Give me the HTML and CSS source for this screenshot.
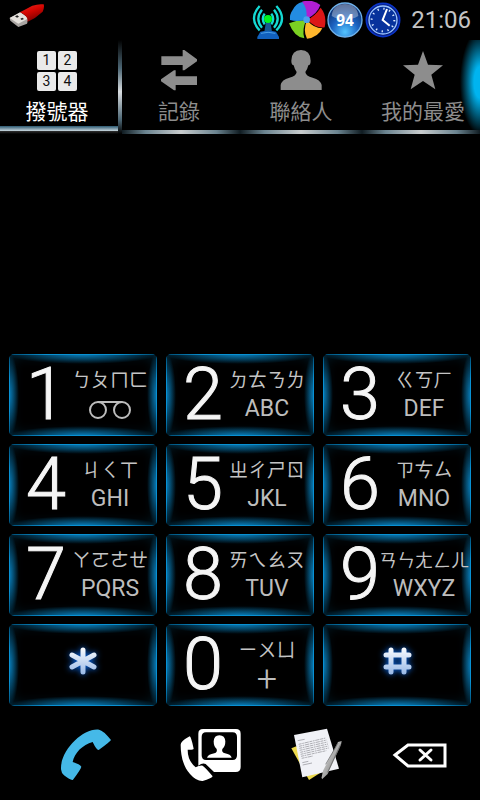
FILE: index.html
```html
<!DOCTYPE html>
<html lang="zh-Hant">
<head>
  <meta charset="UTF-8">
  <meta name="viewport" content="width=device-width, initial-scale=1.0">
  <title>撥號器</title>
  <link rel="stylesheet" href="styles.css">
</head>
<body>
  <div class="phone">
    <header class="status-bar">
      <!-- USB stick -->
      <svg class="usb-icon" width="36" height="24" viewBox="0 0 108 72">
        <defs>
          <linearGradient id="usb-red" x1="0" y1="0" x2="0.5" y2="1">
            <stop offset="0" stop-color="#e82a20"/>
            <stop offset="0.5" stop-color="#d40500"/>
            <stop offset="1" stop-color="#700"/>
          </linearGradient>
        </defs>
        <path d="M2 42 L34 25 L59 43 L54 59 L28 69 L4 50 Z" fill="#a9a5a2"/>
        <path d="M2 42 L34 25 L59 43 L28 59 Z" fill="#e5e1dc"/>
        <path d="M18 37 L25 34 L30 38 L24 41 Z M34 44 L40 41 L45 45 L38 48 Z" fill="#222"/>
        <path d="M33 25 L70 5 Q88 -1 104 1 Q107 10 101 23 Q80 43 55 54 Q60 38 33 25 Z" fill="url(#usb-red)"/>
      </svg>
      <div class="status-icons">
        <svg width="36" height="38" viewBox="0 0 108 114">
          <g fill="none" stroke="#14d9d3" stroke-width="7">
            <path d="M38 38 Q27 53 38 70 M58 38 Q69 53 58 70"/>
            <path d="M30 26 Q8 53 30 80 M66 26 Q88 53 66 80"/>
            <path d="M23 15 Q-11 53 23 88 M73 15 Q107 53 73 88"/>
          </g>
          <path d="M42 62 H55 L60 92 H37 Z" fill="#155a92"/>
          <path d="M25 92 Q48 86 72 92 L81 108 V114 H16 V108 Z" fill="#1160bd"/>
          <path d="M27 97 Q48 91 70 97" fill="none" stroke="#4aa0e8" stroke-width="3"/>
          <circle cx="48" cy="54" r="12" fill="#00f51d"/>
        </svg>
        <svg width="38" height="38" viewBox="0 0 114 114">
          <path d="M56 54 L42 2 Q74 -7 97 12 Q88 39 56 54" fill="#b01fd2"/>
          <path d="M58 56 Q82 44 98 20 Q118 44 110 79 Q84 83 58 56" fill="#dc1717"/>
          <path d="M57 57 Q77 82 103 82 Q90 110 57 113 Q44 89 57 57" fill="#ffb62d"/>
          <path d="M55 58 Q41 86 49 112 Q19 109 3 67 Q28 56 55 58" fill="#7bd022"/>
          <path d="M54 56 Q28 64 6 57 Q4 40 14 27 Q23 8 43 3 Q60 25 55 54" fill="#238ce2"/>
          <circle cx="56" cy="56" r="10" fill="#4aa0ee"/>
        </svg>
        <svg width="38" height="38" viewBox="0 0 114 114">
          <defs>
            <radialGradient id="ball" cx="0.5" cy="0.85" r="0.8">
              <stop offset="0" stop-color="#54c4ff"/>
              <stop offset="0.5" stop-color="#1c62c0"/>
              <stop offset="1" stop-color="#0c2a66"/>
            </radialGradient>
          </defs>
          <circle cx="57" cy="57" r="51" fill="url(#ball)" stroke="#6fb1ea" stroke-width="4"/>
          <path d="M17 45 Q20 10 57 9 Q94 10 97 45 Q57 68 17 45" fill="#fff" opacity="0.35"/>
          <text class="battery-level" x="57" y="76" text-anchor="middle">94</text>
        </svg>
        <svg width="38" height="38" viewBox="0 0 114 114">
          <circle cx="57" cy="57" r="50" fill="#061f80" stroke="#0a34c8" stroke-width="5"/>
          <circle cx="57" cy="57" r="42" fill="#07329c" stroke="#9cc4ff" stroke-width="4"/>
          <circle cx="57" cy="57" r="34" fill="none" stroke="#e0ecff" stroke-width="6" stroke-dasharray="4 13.8"/>
          <path d="M69 24 L56 57 L77 74" fill="none" stroke="#fff" stroke-width="6"/>
        </svg>
      </div>
      <time class="clock">21:06</time>
    </header>

    <nav class="tabs">
      <button class="tab active" type="button">
        <span class="mini-pad"><span>1</span><span>2</span><span>3</span><span>4</span></span>
        <span class="tab-label">撥號器</span>
      </button>
      <button class="tab history" type="button">
        <svg width="40" height="42" viewBox="0 0 120 126">
          <path d="M7 22 H71 V3 H76 L114 31 V37 L76 64 H71 V48 H7 Z M114 82 V108 H50 V124 H45 L6 97 V91 L45 64 H50 V82 Z" fill="#8d8d8d"/>
        </svg>
        <span class="tab-label">記錄</span>
      </button>
      <button class="tab" type="button">
        <svg width="42" height="42" viewBox="0 0 126 126">
          <path d="M2 123 V108 Q5 92 28 86 Q49 81 50 69 Q44 62 41 49 Q34 48 34 35 Q35 3 63 3 Q91 3 92 35 Q92 48 85 49 Q82 62 76 69 Q77 81 98 86 Q121 92 125 108 V123 Z" fill="#8d8d8d"/>
        </svg>
        <span class="tab-label">聯絡人</span>
      </button>
      <button class="tab favorites" type="button">
        <svg width="42" height="42" viewBox="0 0 126 126">
          <path d="M63 6 L78 47 L123 49 L88 77 L100 121 L63 96 L26 121 L38 77 L3 49 L48 47 Z" fill="#8d8d8d"/>
        </svg>
        <span class="tab-label">我的最愛</span>
      </button>
    </nav>

    <main class="dialer">
      <output class="display" aria-label="電話號碼"></output>

      <div class="keypad">
        <button class="key" type="button">
          <span class="digit">1</span>
          <span class="zhuyin">ㄅㄆㄇㄈ</span>
          <span class="letters">
            <svg width="42" height="18" viewBox="0 0 42 18" fill="none" stroke="#bdbdbd" stroke-width="2">
              <circle cx="9" cy="9" r="8"/>
              <circle cx="33" cy="9" r="8"/>
              <path d="M9 1 H33"/>
            </svg>
          </span>
        </button>
        <button class="key" type="button">
          <span class="digit">2</span>
          <span class="zhuyin">ㄉㄊㄋㄌ</span>
          <span class="letters">ABC</span>
        </button>
        <button class="key" type="button">
          <span class="digit">3</span>
          <span class="zhuyin">ㄍㄎㄏ</span>
          <span class="letters">DEF</span>
        </button>
        <button class="key" type="button">
          <span class="digit">4</span>
          <span class="zhuyin">ㄐㄑㄒ</span>
          <span class="letters">GHI</span>
        </button>
        <button class="key" type="button">
          <span class="digit">5</span>
          <span class="zhuyin">ㄓㄔㄕㄖ</span>
          <span class="letters">JKL</span>
        </button>
        <button class="key" type="button">
          <span class="digit">6</span>
          <span class="zhuyin">ㄗㄘㄙ</span>
          <span class="letters">MNO</span>
        </button>
        <button class="key" type="button">
          <span class="digit">7</span>
          <span class="zhuyin">ㄚㄛㄜㄝ</span>
          <span class="letters">PQRS</span>
        </button>
        <button class="key" type="button">
          <span class="digit">8</span>
          <span class="zhuyin">ㄞㄟㄠㄡ</span>
          <span class="letters">TUV</span>
        </button>
        <button class="key" type="button">
          <span class="digit">9</span>
          <span class="zhuyin small">ㄢㄣㄤㄥㄦ</span>
          <span class="letters">WXYZ</span>
        </button>
        <button class="key symbol" type="button" aria-label="*">
          <svg class="glow" width="40" height="40" viewBox="0 0 40 40">
            <defs>
              <linearGradient id="ice" gradientUnits="userSpaceOnUse" x1="0" y1="6" x2="0" y2="34">
                <stop offset="0" stop-color="#fff"/>
                <stop offset="1" stop-color="#94b6e6"/>
              </linearGradient>
            </defs>
            <path d="M20 9 V31 M9 14 L31 26 M31 14 L9 26" stroke="url(#ice)" stroke-width="5" stroke-linecap="round"/>
          </svg>
        </button>
        <button class="key" type="button">
          <span class="digit">0</span>
          <span class="zhuyin">ㄧㄨㄩ</span>
          <span class="letters plus">+</span>
        </button>
        <button class="key symbol" type="button" aria-label="#">
          <svg class="glow" width="40" height="40" viewBox="0 0 40 40">
            <path d="M14 9 V31 M27 9 V31 M9 14 H32 M9 26 H32" stroke="url(#ice)" stroke-width="5" stroke-linecap="round"/>
          </svg>
        </button>
      </div>
    </main>

    <footer class="actions">
      <button type="button" aria-label="撥打">
        <svg width="52" height="52" viewBox="60 44 156 156">
          <path d="M63 165 C60 108 130 40 177 46 Q190 48 213 77 Q212 81 176 107 Q170 108 158 83 C128 91 103 116 98 143 Q120 150 124 157 Q123 164 99 196 Q94 200 72 183 Q64 176 63 165 Z" fill="#45b9e8"/>
        </svg>
      </button>
      <button type="button" aria-label="聯絡人">
        <svg width="62" height="54" viewBox="421 45 186 162">
          <path fill-rule="evenodd" d="M490 48 H589 Q603 48 603 62 V162 Q603 177 588 177 H523 L498 153 Q488 149 476 158 V62 Q476 48 490 48 Z M499 58 Q486 58 486 72 V127 Q486 141 499 141 H579 Q592 141 592 127 V72 Q592 58 579 58 Z" fill="#fff"/>
          <path d="M502 134 Q506 124 524 121 Q534 118 531 108 Q522 101 522 85 Q523 67 539 67 Q556 67 557 85 Q557 101 548 108 Q545 118 556 121 Q573 124 576 134 Z" fill="#fff"/>
          <path d="M423 95 Q424 84 450 70 Q454 70 462 107 Q461 111 444 110 Q444 143 468 163 Q478 157 489 158 Q498 164 519 190 Q515 197 489 204 Q470 205 451 183 C430 160 423 126 423 95 Z" fill="#fff"/>
        </svg>
      </button>
      <button type="button" aria-label="筆記">
        <svg width="52" height="54" viewBox="64 39 156 162">
          <defs>
            <linearGradient id="pen" x1="0" y1="0" x2="1" y2="1">
              <stop offset="0" stop-color="#eee"/>
              <stop offset="0.5" stop-color="#aaa"/>
              <stop offset="1" stop-color="#555"/>
            </linearGradient>
          </defs>
          <path d="M65 100 L80 94 L150 175 L118 195 Z" fill="#ecd94c"/>
          <path d="M73 60 L172 41 L208 161 L98 187 Z" fill="#f1f2f7"/>
          <g stroke="#8b8b91" stroke-width="2" fill="none">
            <path d="M84 77 L105 73"/>
            <path d="M87 88 L168 69 M88 94 L171 75 M89 100 L173 81 M90 106 L175 87 M92 112 L176 93 M93 118 L177 99 M94 124 L170 107 M96 130 L130 123" stroke-dasharray="9 2 5 2 13 2"/>
            <path d="M98 143 L116 139 M99 150 L127 144"/>
          </g>
          <path d="M205 81 L216 78 L214 89 L174 177 L157 193 L156 187 L160 167 Z" fill="url(#pen)"/>
          <path d="M205 84 L168 148 M213 88 L174 172" stroke="#555" stroke-width="2"/>
        </svg>
      </button>
      <button type="button" aria-label="刪除">
        <svg width="56" height="26" viewBox="0 0 56 26" fill="none" stroke="#fff">
          <path d="M3 13 L16 3 H53 V24 H16 Z" stroke-width="3"/>
          <path d="M28 8 L39 18 M39 8 L28 18" stroke-width="3" stroke-linecap="round"/>
        </svg>
      </button>
    </footer>
  </div>
</body>
</html>
```
FILE: styles.css
```css
* {
  box-sizing: border-box;
}

body {
  margin: 0;
  background: #000;
  color: #c4c4c4;
  font-family: Roboto, "Noto Sans CJK TC", sans-serif;
}

button {
  padding: 0;
  border: none;
  background: none;
  color: inherit;
  font-family: inherit;
  cursor: pointer;
}

svg {
  display: block;
}

.phone {
  display: flex;
  flex-direction: column;
  min-height: 100vh;
}

/* Status bar */
.status-bar {
  display: flex;
  align-items: center;
  height: 40px;
  padding: 0 9px;
}

.usb-icon {
  margin-bottom: 8px;
}

.status-icons {
  display: flex;
  margin-left: auto;
  margin-right: 9px;
}

.battery-level {
  fill: #fff;
  font: bold 46px "Noto Sans", sans-serif;
}

.clock {
  font-size: 24px;
  line-height: 40px;
}

/* Tabs */
.tabs {
  display: grid;
  grid-template-columns: 61fr 59fr 61fr 59fr;
  height: 94px;
  background: radial-gradient(ellipse 20px 52px at 100% 45%, #00b4f0 30%, transparent);
}

.tab {
  display: flex;
  flex-direction: column;
  align-items: center;
  gap: 4px;
  padding-top: 9px;
  color: #8d8d8d;
  background: linear-gradient(to right, #101c22, #6b8490 20%, #c8cccd 50%, #6b8490 80%, #101c22) bottom / 100% 4px no-repeat;
}

.tab.active {
  padding-right: 8px;
  color: #fff;
  background:
    linear-gradient(to bottom, transparent, #4c6674 30%, #d8dcdf 55%, #4c6674 85%, transparent) right / 4px 100% no-repeat,
    linear-gradient(to bottom, #2b5870, #c3d2da 60%, #333 61%, #000) bottom left / 97% 8px no-repeat;
}

.tab.history {
  padding-right: 4px;
}

.tab.favorites {
  padding-left: 4px;
}

.tab-label {
  font-size: 21px;
  line-height: 34px;
}

.mini-pad {
  display: grid;
  grid-template-columns: 19px 19px;
  gap: 2px;
  padding: 2px 0 0;
}

.mini-pad span {
  border-radius: 2px;
  background: #eaeaea;
  color: #111;
  font-size: 14px;
  line-height: 19px;
}

/* Dialer */
.dialer {
  display: flex;
  flex: 1;
  flex-direction: column;
}

.display {
  flex: 1;
  min-height: 60px;
}

.keypad {
  display: grid;
  grid-template-columns: repeat(3, minmax(0, 1fr));
  gap: 8px 9px;
  padding: 0 9px;
}

.key {
  display: grid;
  grid-template-columns: 40px minmax(0, 1fr);
  grid-template-rows: 30px 30px;
  align-content: center;
  align-items: center;
  justify-items: center;
  height: 82px;
  padding: 0 3px 0 17px;
  border-radius: 5px;
  background:
    linear-gradient(to right, #00476b, #0a9ae0 25%, #0a9ae0 75%, #00476b) top / 100% 1px no-repeat,
    linear-gradient(to right, #00476b, #0a9ae0 25%, #0a9ae0 75%, #00476b) bottom / 100% 1px no-repeat,
    linear-gradient(to bottom, #00476b, #0a9ae0 30%, #0a9ae0 70%, #00476b) left / 1px 100% no-repeat,
    linear-gradient(to bottom, #00476b, #0a9ae0 30%, #0a9ae0 70%, #00476b) right / 1px 100% no-repeat,
    radial-gradient(ellipse 52% 10px at 50% 0, #0a86c6, transparent),
    radial-gradient(ellipse 52% 10px at 50% 100%, #0a86c6, transparent),
    radial-gradient(ellipse 10px 52% at 0 50%, #0a86c6, transparent),
    radial-gradient(ellipse 10px 52% at 100% 50%, #0a86c6, transparent);
  box-shadow: inset 0 0 14px rgba(0, 100, 150, 0.35);
}

.digit {
  grid-row: 1 / 3;
  color: #f5f5f5;
  font-size: 72px;
  font-weight: 300;
  line-height: 60px;
  -webkit-text-stroke: 1px #f5f5f5;
}

.zhuyin {
  font-family: "Noto Sans CJK TC", sans-serif;
  font-size: 19px;
  font-weight: 400;
  line-height: 28px;
  align-self: start;
  white-space: nowrap;
}

.zhuyin.small {
  font-size: 18px;
}

.letters {
  align-self: start;
  color: #bdbdbd;
  font-size: 23px;
  line-height: 28px;
}

.letters svg {
  margin-top: 6px;
}

.letters.plus {
  font-size: 36px;
  font-weight: 300;
}

.key.symbol {
  display: flex;
  align-items: center;
  justify-content: center;
  padding: 0 0 8px;
}

.glow {
  filter: drop-shadow(0 0 3px #0a6cf0);
}

/* Bottom actions */
.actions {
  display: grid;
  grid-template-columns: 62fr 63fr 43fr 60fr;
  align-items: center;
  height: 94px;
  padding: 4px 0 0 24px;
}

.actions button {
  display: flex;
  justify-content: center;
}
```
